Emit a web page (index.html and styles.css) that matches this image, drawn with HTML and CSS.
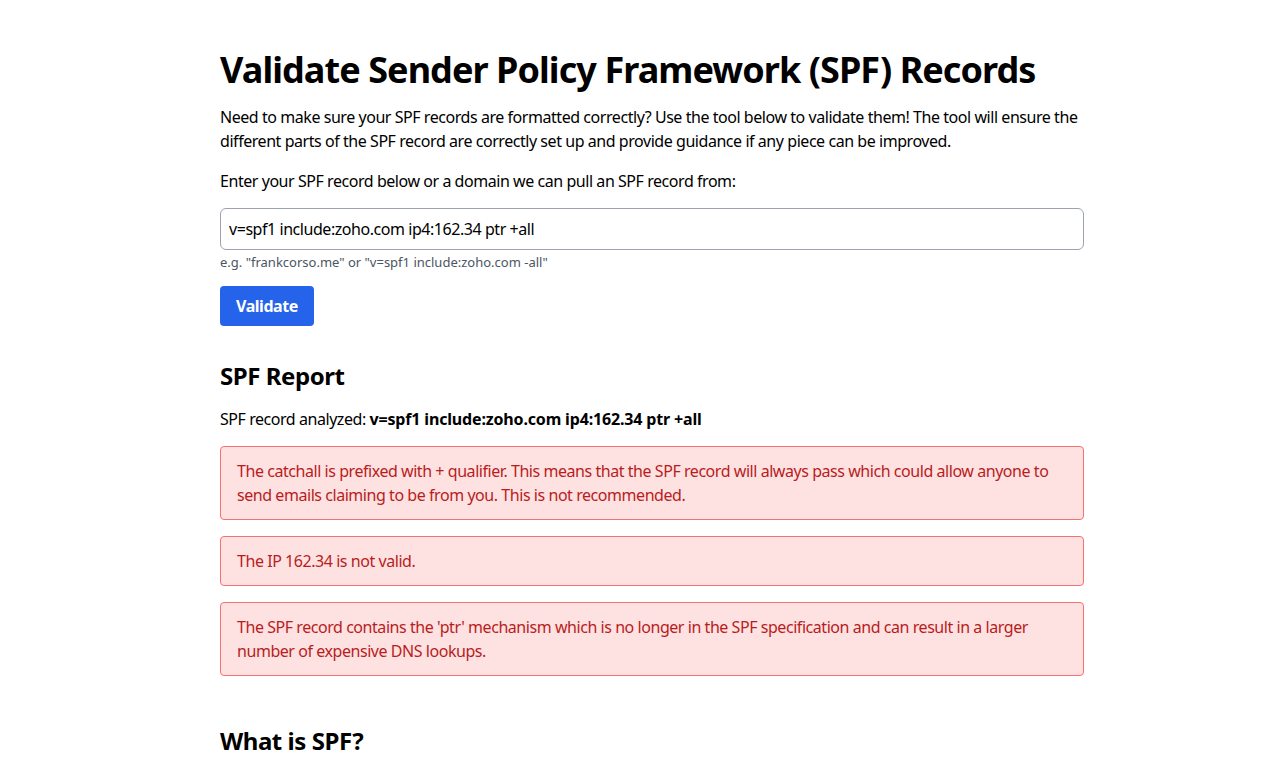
FILE: index.html
```html
<!DOCTYPE html>
<html lang="en">
<head>
    <meta charset="UTF-8">
    <meta name="viewport" content="width=device-width, initial-scale=1.0">
    <title>SPF Record Validator</title>
    <link rel="stylesheet" href="styles.css">
</head>
<body>
    <div class="container">
        <h1>Validate Sender Policy Framework (SPF) Records</h1>
        <p>Need to make sure your SPF records are formatted correctly? Use the tool below to validate them! The tool will ensure the different parts of the SPF record are correctly set up and provide guidance if any piece can be improved.</p>
        <p class="lead">Enter your SPF record below or a domain we can pull an SPF record from:</p>

        <div class="input-group">
            <input type="text" id="spf-input" value="v=spf1 include:zoho.com ip4:162.34 ptr +all">
            <div class="hint">e.g. "frankcorso.me" or "v=spf1 include:zoho.com -all"</div>
        </div>
        <button class="btn">Validate</button>

        <div class="report">
            <h2>SPF Report</h2>
            <p>SPF record analyzed: <strong>v=spf1 include:zoho.com ip4:162.34 ptr +all</strong></p>
            <div class="alert">The catchall is prefixed with + qualifier. This means that the SPF record will always pass which could allow anyone to send emails claiming to be from you. This is not recommended.</div>
            <div class="alert">The IP 162.34 is not valid.</div>
            <div class="alert">The SPF record contains the 'ptr' mechanism which is no longer in the SPF specification and can result in a larger number of expensive DNS lookups.</div>
        </div>

        <h2 class="about">What is SPF?</h2>
    </div>
</body>
</html>
```

FILE: styles.css
```css
body {
    font-family: "Noto Sans", "Open Sans", sans-serif;
    letter-spacing: -0.028em;
    background-color: #fff;
    color: #000;
    margin: 0;
    padding: 0;
}
.container {
    width: 864px;
    margin: 0 0 0 220px;
    padding-top: 50px;
}
h1 {
    font-size: 36px;
    line-height: 40px;
    font-weight: 700;
    letter-spacing: -0.93px;
    margin: 0 0 15px;
}
h2 {
    font-size: 24px;
    line-height: 32px;
    font-weight: 700;
    margin: 0 0 15px;
}
p {
    font-size: 16px;
    line-height: 24px;
    margin: 0 0 16px;
}
p strong {
    letter-spacing: -0.01em;
}
.lead {
    margin-bottom: 15px;
}
.input-group {
    margin-bottom: 16px;
}
.input-group input {
    display: block;
    box-sizing: border-box;
    width: 100%;
    height: 42px;
    padding: 8px;
    font-family: inherit;
    font-size: 16px;
    letter-spacing: inherit;
    color: #000;
    border: 1px solid #9ca3af;
    border-radius: 6px;
    outline: none;
}
.hint {
    font-size: 13px;
    line-height: 16px;
    letter-spacing: 0;
    color: #4b5563;
    margin-top: 4px;
}
.btn {
    display: block;
    height: 40px;
    padding: 0 16px;
    font-family: inherit;
    font-size: 16px;
    font-weight: 700;
    letter-spacing: inherit;
    color: #fff;
    background-color: #2563eb;
    border: none;
    border-radius: 4px;
    cursor: pointer;
}
.report {
    margin-top: 34px;
}
.report p {
    margin-bottom: 15px;
}
.alert {
    font-size: 16px;
    line-height: 24px;
    color: #b91c1c;
    background-color: #fee2e2;
    border: 1px solid #f87171;
    border-radius: 4px;
    padding: 12px 16px;
    margin-bottom: 16px;
}
.about {
    margin-top: 49px;
}
```
